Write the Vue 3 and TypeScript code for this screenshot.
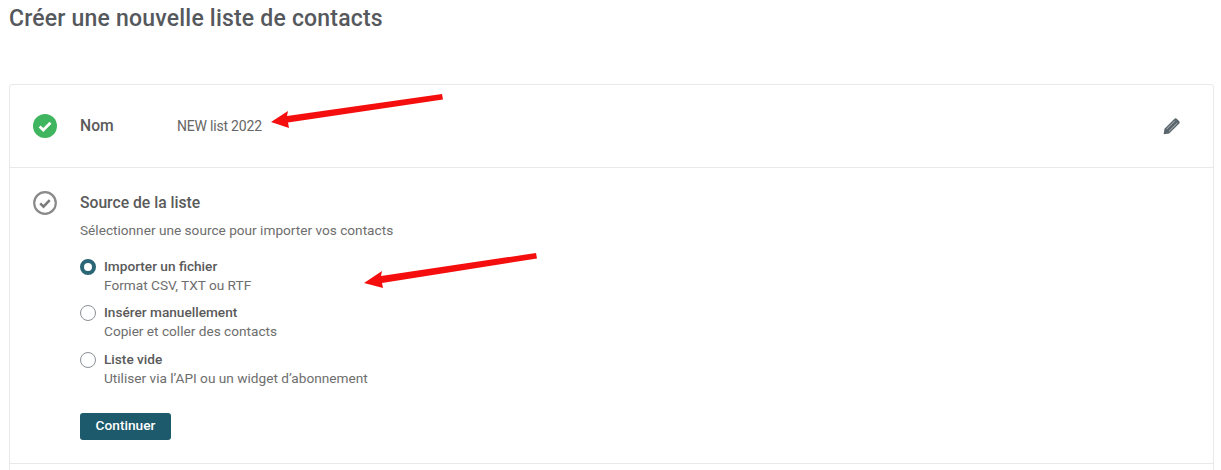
<script setup lang="ts">
interface Option {
  title: string
  hint: string
  selected: boolean
}

const options: Option[] = [
  { title: 'Importer un fichier', hint: 'Format CSV, TXT ou RTF', selected: true },
  { title: 'Insérer manuellement', hint: 'Copier et coller des contacts', selected: false },
  { title: 'Liste vide', hint: 'Utiliser via l’API ou un widget d’abonnement', selected: false },
]
</script>

<template>
  <div class="page">
    <h1 class="title">Créer une nouvelle liste de contacts</h1>

    <section class="card">
      <div class="row name-row">
        <svg class="status" viewBox="0 0 24 24" width="24" height="24" aria-hidden="true">
          <circle cx="12" cy="12" r="12" fill="#3fb55f" />
          <path d="M6.600 12.400l3.700 3.700 7.200-7.400" fill="none" stroke="#fff" stroke-width="2.800" />
        </svg>
        <span class="label">Nom</span>
        <span class="value">NEW list 2022</span>
        <svg class="pencil" viewBox="0 0 16 16" width="17" height="17" aria-hidden="true">
          <path d="M10.600 .9a1.800 1.800 0 0 1 2.500 0l2 2a1.800 1.800 0 0 1 0 2.500L5.800 14.600 .6 15.400 1.400 10.200z" fill="#5a666b" />
          <path d="M3.400 10.400l7.800-7.800M5.600 12.600L13.400 4.800" stroke="#c3c9cb" stroke-width=".8" fill="none" />
        </svg>
      </div>

      <div class="row source-row">
        <svg class="status" viewBox="0 0 24 24" width="24" height="24" aria-hidden="true">
          <circle cx="12" cy="12" r="10.800" fill="none" stroke="#8a8a8a" stroke-width="2.200" />
          <path d="M7.200 12.400l3.300 3.300 6.200-6.600" fill="none" stroke="#7a7a7a" stroke-width="2.500" />
        </svg>
        <div class="source-body">
          <h2 class="label">Source de la liste</h2>
          <p class="intro">Sélectionner une source pour importer vos contacts</p>
          <ul class="options">
            <li v-for="option in options" :key="option.title" class="option">
              <span class="radio" :class="{ selected: option.selected }"></span>
              <div>
                <div class="option-title">{{ option.title }}</div>
                <div class="option-hint">{{ option.hint }}</div>
              </div>
            </li>
          </ul>
          <button class="continue" type="button">Continuer</button>
        </div>
      </div>
    </section>

    <svg class="arrows" viewBox="0 0 1221 470" width="1221" height="470" aria-hidden="true">
      <path d="M442 94L287 116L288 111L271 122L289 128L288 122.500L443 99.500Z" fill="#f50e0e" />
      <path d="M536 253L381 276L382 271L364 283L383 288L382 283L537 258.500Z" fill="#f50e0e" />
    </svg>
  </div>
</template>

<style>
html, body {
  margin: 0;
  background: #fff;
  overflow: hidden;
}
</style>

<style scoped>
.page {
  position: relative;
  width: 1221px;
  height: 470px;
  box-sizing: border-box;
  padding: 7px 7px 0 9px;
  overflow: hidden;
  font-family: Roboto, "Liberation Sans", sans-serif;
  color: #5b5b5b;
}
.title {
  margin: 0 0 53px;
  font-size: 23px;
  line-height: 24px;
  font-weight: 500;
  color: #55585c;
  letter-spacing: 0.2px;
}
.card {
  border: 1px solid #e9e9e9;
  border-radius: 3px;
  height: 420px;
}
.row {
  display: flex;
  padding-left: 23px;
}
.name-row {
  height: 82px;
  align-items: center;
  padding-right: 33px;
  border-bottom: 1px solid #e9e9e9;
}
.status {
  flex: none;
}
.name-row .label {
  width: 97px;
}
.label {
  margin: 0;
  margin-left: 23px;
  font-size: 15.700px;
  line-height: 20px;
  font-weight: 500;
  color: #5a5a5a;
}
.value {
  font-size: 14px;
  letter-spacing: -0.2px;
  color: #666;
}
.pencil {
  margin-left: auto;
}
.source-row {
  padding-top: 23px;
  height: 272px;
  border-bottom: 1px solid #e9e9e9;
}
.source-body .label {
  line-height: 24px;
}
.source-body {
  display: flex;
  flex-direction: column;
  align-items: flex-start;
}
.intro {
  margin: 5px 0 0 23px;
  font-size: 13.650px;
  line-height: 21px;
  color: #6e6e6e;
}
.options {
  list-style: none;
  margin: 15.500px 0 0 23px;
  padding: 0;
  display: flex;
  flex-direction: column;
  gap: 8.500px;
}
.option {
  display: flex;
  gap: 8px;
}
.radio {
  box-sizing: border-box;
  flex: none;
  width: 16px;
  height: 16px;
  margin-top: 2px;
  border: 1px solid #8a8f94;
  border-radius: 50%;
  background: #fff;
}
.radio.selected {
  border: 4.500px solid #2b6676;
}
.option-title {
  font-size: 13.650px;
  line-height: 19px;
  font-weight: 500;
  color: #5a5a5a;
}
.option-hint {
  font-size: 13.650px;
  line-height: 19px;
  color: #6e6e6e;
}
.continue {
  margin: 25px 0 0 23px;
  width: 91px;
  height: 27px;
  padding: 0 0 2px;
  border: 0;
  border-radius: 3px;
  background: #1d5a6b;
  color: #fff;
  font: 500 13.700px Roboto, "Liberation Sans", sans-serif;
}
.arrows {
  position: absolute;
  top: 0;
  left: 0;
  pointer-events: none;
}
</style>
